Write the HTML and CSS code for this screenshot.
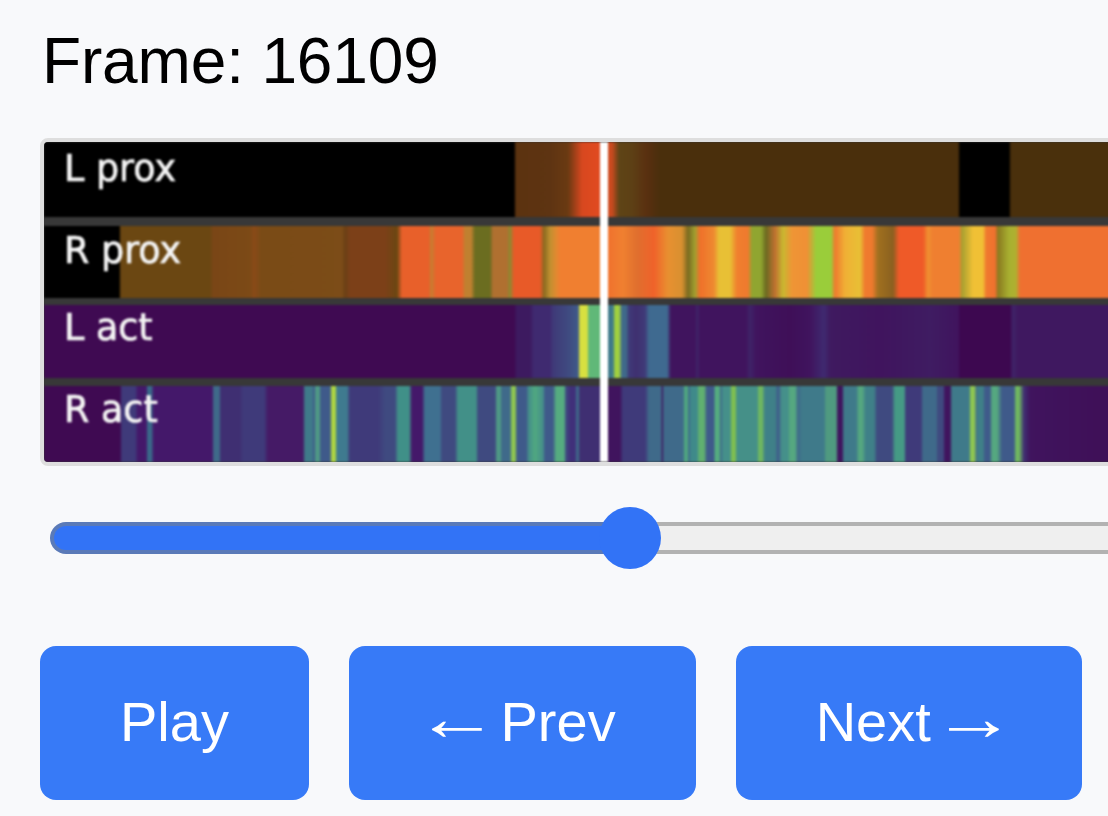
FILE: index.html
```html
<!DOCTYPE html>
<html lang="en">
<head>
    <meta charset="UTF-8">
    <meta name="viewport" content="width=device-width, initial-scale=1.0">
    <title>Frame viewer</title>
    <link rel="stylesheet" href="styles.css">
</head>
<body>
    <main class="viewer">
        <h1 class="frame-label">Frame: 16109</h1>
        <div class="heatmap">
            <div class="heatmap-strips">
                <div class="strip strip-l-prox"><span class="strip-name">L prox</span></div>
                <div class="strip strip-r-prox"><span class="strip-name">R prox</span></div>
                <div class="strip strip-l-act"><span class="strip-name">L act</span></div>
                <div class="strip strip-r-act"><span class="strip-name">R act</span></div>
                <div class="playhead"></div>
            </div>
        </div>
        <input class="frame-slider" type="range" min="0" max="36323" value="16109" aria-label="Frame">
        <div class="controls">
            <button class="control-btn" type="button">Play</button>
            <button class="control-btn" type="button"><span class="arrow">←</span> <span>Prev</span></button>
            <button class="control-btn" type="button"><span>Next</span> <span class="arrow">→</span></button>
        </div>
    </main>
</body>
</html>
```

FILE: styles.css
```css
/* General page styling */
html, body {
    height: 100%;
    margin: 0;
    overflow: hidden;
}

body {
    background: #f8f9fb;
    font-family: "Liberation Sans", Arial, sans-serif;
    color: #000;
}

.viewer {
    width: 1400px;
    padding: 24px 0 0 40px;
}

.frame-label {
    margin: 0 0 40px;
    font-size: 64px;
    font-weight: 400;
    line-height: 74px;
    padding-left: 2px;
    letter-spacing: -0.15px;
}

/* Heatmap image */
.heatmap {
    border: 4px solid #dedede;
    border-radius: 8px;
    overflow: hidden;
    height: 320px;
    background: #383838;
}

.heatmap-strips {
    position: relative;
    display: flex;
    flex-direction: column;
    height: 320px;
    filter: blur(1px);
}

.strip {
    box-sizing: border-box;
    padding-left: 20px;
    color: #f4f4f4;
    font-family: "DejaVu Sans", sans-serif;
    font-size: 36.5px;
    line-height: 40px;
    -webkit-text-stroke: 0.7px #f4f4f4;
    /* stops below are written in page x, the -44px shifts them onto the strip */
    background-position: -44px 0;
    background-size: 1400px 100%;
    background-repeat: no-repeat;
}

.strip-name {
    display: block;
}

.strip-l-prox {
    height: 75px;
    margin-bottom: 9px;
    padding-top: 7px;
    background-image: linear-gradient(to right,
        #000 514px, #5c3310 516px, #5e3412 550px, #6a3a12 568px, #d8481f 582px,
        #e04a20 598px, #c84a1f 612px, #5f4416 619px, #5d4015 632px, #5a3010 646px,
        #4a2f0c 660px, #4a2f0c 958px, #000 960px, #000 1009px, #4a300c 1011px, #4a300c 1400px);
}

.strip-r-prox {
    height: 72px;
    margin-bottom: 7px;
    padding-top: 5px;
    background-image: linear-gradient(to right,
        #000 119px, #6b4712 121px, #6b4712 210px, #7a4616 213px, #7c4a16 250px, #8a4a18 254px,
        #7a4b16 261px, #7c4c18 342px, #6b4015 345px, #7c4018 350px, #7c4018 385px, #6b4712 397px,
        #e8602a 402px, #e8602a 429px, #c47f30 431px, #e8642c 436px, #e8642c 462px, #c08030 465px,
        #c08030 471px, #6b6d20 475px, #6b6d20 490px, #b07030 493px, #b07030 507px, #8a8a30 510px,
        #e85a28 514px, #e85a28 540px, #8a6a20 544px, #c09030 550px, #e08a30 556px, #f07f30 560px,
        #f07f30 599px, #f0732e 609px, #f08030 623px, #e06f2e 637px, #f0622a 654px, #e89030 668px,
        #d89030 682px, #7a6a20 688px, #a0a030 695px, #f0702a 700px, #ee8a30 714px, #e8c035 719px,
        #e8c035 730px, #f07f2e 737px, #ef7a2e 748px, #90a530 752px, #90a530 761px, #6b6a20 766px,
        #c07030 775px, #c8b830 783px, #ef9535 792px, #ef9035 807px, #9acd3a 816px, #9acd3a 831px,
        #ef7a2e 835px, #f0b035 845px, #e8c035 860px, #ef7a2e 865px, #ef7a2e 872px, #a0701f 878px,
        #8a6020 893px, #ef5a28 899px, #ef5a28 923px, #ef9030 928px, #ef7f30 933px, #ef7f30 959px,
        #a8a030 962px, #f0c035 973px, #f0c035 983px, #ef7a2e 986px, #ef702e 995px, #8a7a20 998px,
        #a8b030 1009px, #b0b030 1016px, #ef7030 1020px, #ef7030 1400px);
}

.strip-l-act {
    height: 73px;
    margin-bottom: 8px;
    padding-top: 3px;
    background-image: linear-gradient(to right,
        #3f0a52 514px, #3d1a60 517px, #3d1a60 530px, #3f2a70 534px, #3f2a70 550px, #3f3a78 553px,
        #3f4a80 568px, #3f5a8a 578px, #d8e040 580px, #d8e040 587px, #60b878 589px, #60b878 599px,
        #3f7a8a 608px, #3f7a8a 613px, #a0d040 615px, #a0d040 619px, #3f6a8a 622px, #3f6a8a 626px,
        #3f3a78 629px, #3f3070 636px, #3f3a78 645px, #3f6a90 649px, #3f6a90 667px, #40145e 671px,
        #40145e 695px, #3f2468 697px, #40145e 700px, #40145e 746px, #3f2468 750px, #40145e 756px,
        #3f0f58 790px, #40145e 810px, #3f2a70 824px, #3f1a60 830px, #40145e 880px, #3f1c62 930px,
        #40145e 958px, #3d0850 960px, #3d0850 1010px, #3f2468 1013px, #3f1860 1018px, #3f1860 1400px);
}

.strip-r-act {
    height: 76px;
    padding-top: 4px;
    background-image: linear-gradient(to right,
        #3f0a52 120px, #3f3a7a 122px, #3f3a7a 135px, #44186a 138px, #44186a 146px, #3a6a8a 148px,
        #3a6a8a 151px, #44186a 154px, #44186a 212px, #3f6a8a 214px, #3f6a8a 219px, #3f2f72 221px,
        #3f2f72 240px, #3f3a7a 243px, #3f3a7a 264px, #451a66 268px, #451a66 303px, #3f7a8a 305px,
        #3f7a8a 312px, #3f5a8a 314px, #4f9a85 316px, #4f9a85 319px, #3f5a8a 321px, #3f5a8a 330px,
        #b0d840 332px, #b0d840 335px, #3f7a8f 337px, #3f7a8f 347px, #3f3a7a 350px, #3f3a7a 378px,
        #3f4a80 385px, #3f4a80 395px, #409088 398px, #409088 409px, #44186a 412px, #44186a 422px,
        #3f7090 425px, #3f7090 440px, #3f4a80 442px, #3f4a80 455px, #429088 458px, #429088 476px,
        #3f4a80 478px, #3f4a80 495px, #4f9a85 497px, #4f9a85 500px, #3f6a8a 502px, #3f6a8a 510px,
        #90c850 512px, #90c850 515px, #3f5a8a 517px, #3f5a8a 526px, #45908a 529px, #50a880 535px,
        #45908a 543px, #3f5a8a 545px, #3f5a8a 553px, #55ac80 556px, #55ac80 564px, #3f4a80 566px,
        #40307a 570px, #40307a 575px, #3f6a8a 577px, #3f6a8a 578px, #3f2f72 580px, #3f2f72 599px,
        #40145e 608px, #40145e 620px, #3f3a7a 623px, #3f3a7a 645px, #3f6a8a 649px, #3f6a8a 661px,
        #40145e 662px, #3f6a8a 664px, #3f6a8a 683px, #50a880 685px, #50a880 687px, #3f6a8a 689px,
        #3f8a8a 691px, #3f8a8a 697px, #60b070 699px, #60b070 704px, #3f5a8a 707px, #3f5a8a 714px,
        #55ac80 715px, #55ac80 719px, #3f6a8a 721px, #45908a 723px, #45908a 730px, #80c050 732px,
        #80c050 735px, #459088 737px, #459088 757px, #70b860 759px, #70b860 762px, #3f8088 765px,
        #3f8088 775px, #3f5a8a 778px, #45908a 782px, #45908a 788px, #55a880 790px, #55a880 795px,
        #3f6a8a 798px, #3f7a8a 802px, #3f7a8a 824px, #4f9a80 826px, #4f9a80 836px, #40145e 838px,
        #40145e 842px, #3f7a8a 844px, #3f7a8a 856px, #55a880 859px, #55a880 862px, #3f8088 866px,
        #3f8088 874px, #3f4a80 877px, #3f4a80 892px, #459a85 895px, #459a85 904px, #3f3a7a 906px,
        #3f3a7a 921px, #3f6a8a 923px, #3f6a8a 936px, #3f4a80 938px, #3f4a80 943px, #40145e 945px,
        #40145e 950px, #3f7a8a 952px, #3f7a8a 969px, #90c850 971px, #90c850 974px, #3f6a8a 977px,
        #3f8088 978px, #3f8088 983px, #3f5a8a 985px, #3f5a8a 990px, #55a880 992px, #55a880 997px,
        #3f5a8a 1002px, #3f5a8a 1014px, #70b860 1016px, #70b860 1019px, #3f2f72 1024px, #40145e 1030px,
        #3f1058 1100px, #40145e 1400px);
}

.playhead {
    position: absolute;
    top: 0;
    bottom: 0;
    left: 556px;
    width: 8px;
    background: #fff;
}

/* Frame slider */
.frame-slider {
    display: block;
    width: 1300px;
    height: 62px;
    margin: 41px 0 0 10px;
    -webkit-appearance: none;
    appearance: none;
    background: transparent;
}

.frame-slider::-webkit-slider-runnable-track {
    box-sizing: border-box;
    height: 32px;
    border: 4px solid transparent;
    border-radius: 16px;
    background:
        linear-gradient(to right, #3273f6 576px, #efefef 576px) padding-box,
        linear-gradient(to right, #5a7ab8 580px, #b2b2b2 580px) border-box;
}

.frame-slider::-webkit-slider-thumb {
    -webkit-appearance: none;
    width: 62px;
    height: 62px;
    margin-top: -19px;
    border-radius: 50%;
    background: #3273f6;
}

/* Buttons */
.controls {
    display: flex;
    gap: 40px;
    margin-top: 77px;
}

.control-btn {
    height: 154px;
    padding: 0 80px 3px;
    border: none;
    border-radius: 16px;
    background: #377af7;
    color: #fff;
    font-family: inherit;
    font-size: 56px;
    cursor: pointer;
}

/* the arrow glyph is short in this font, stretch it */
.arrow {
    display: inline-block;
    transform: translateY(-4px) scale(1.5, 1.15);
}
```
